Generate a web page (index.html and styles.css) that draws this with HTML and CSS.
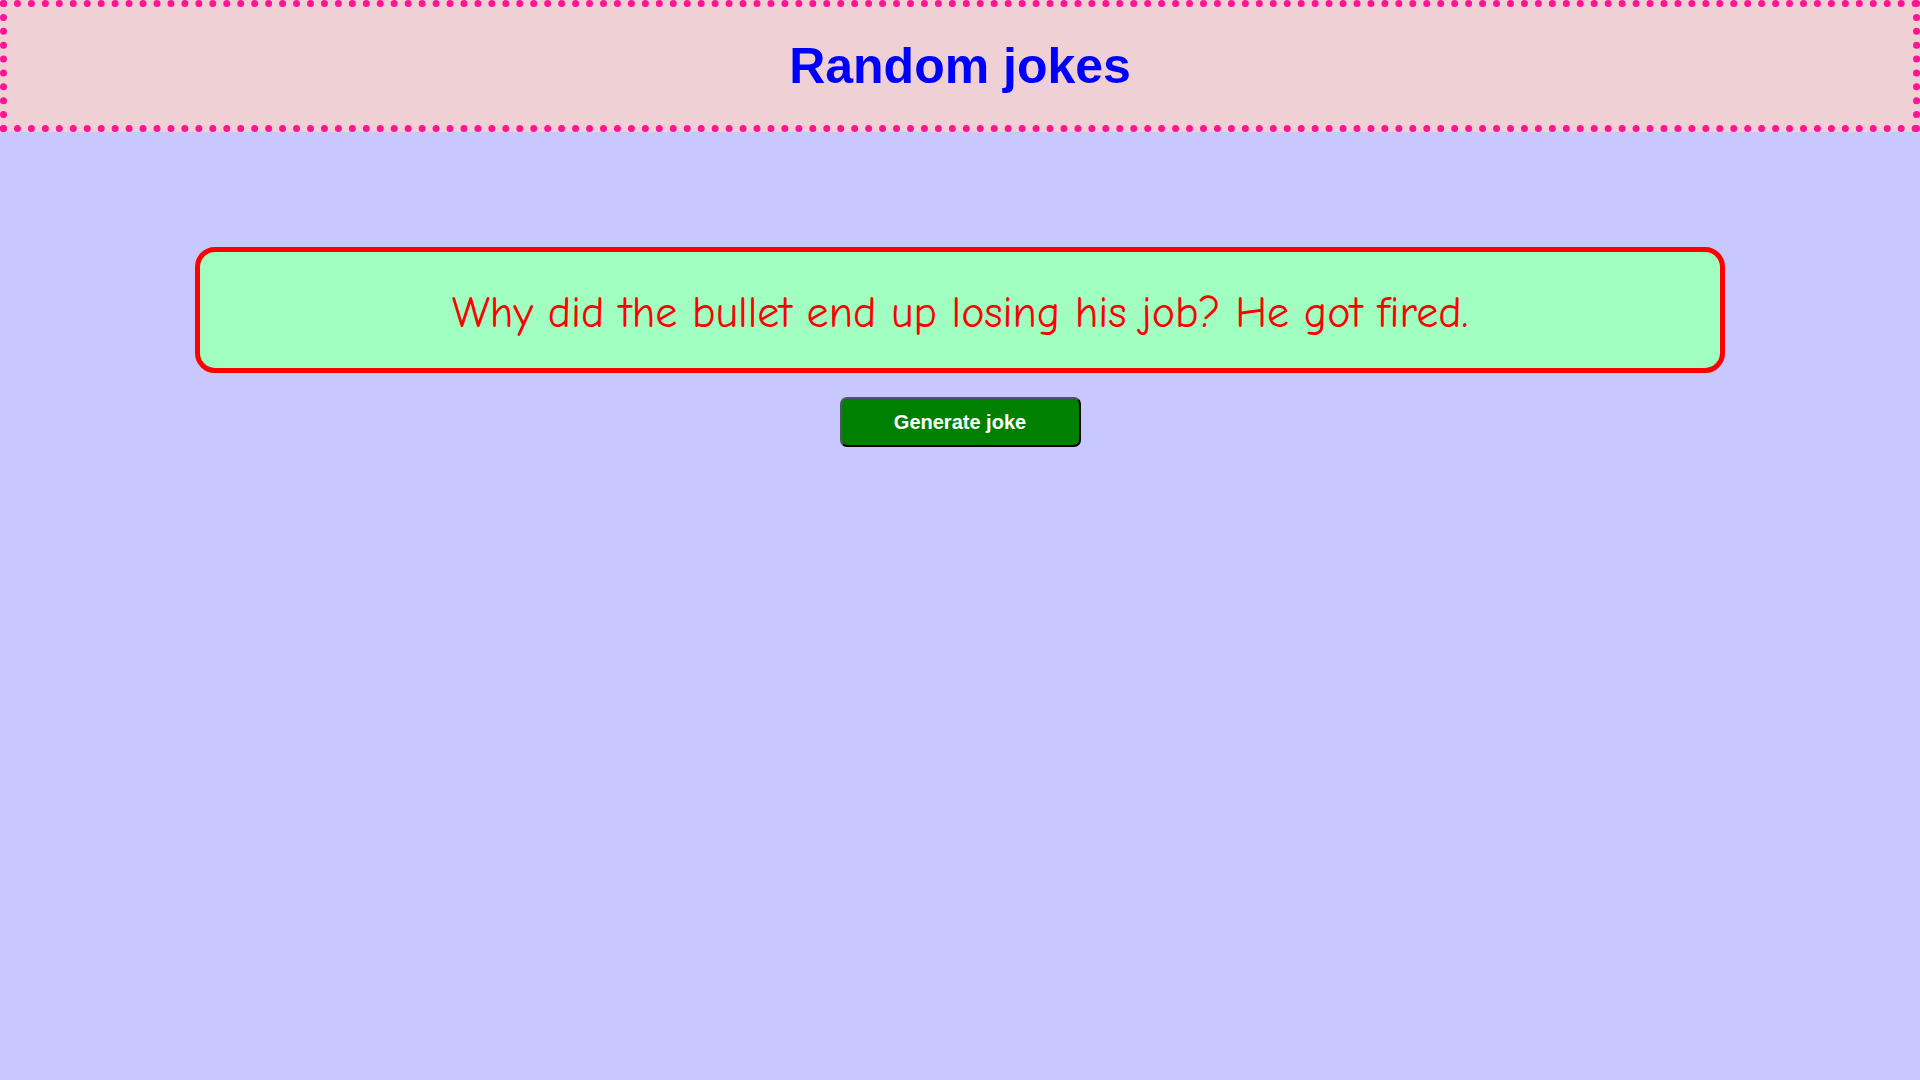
FILE: index.html
```html
<!DOCTYPE html>
<html lang="en">
<head>
<meta charset="utf-8">
<title>Random jokes</title>
<link rel="stylesheet" href="styles.css">
</head>
<body>
<header class="header">
  <h1 class="title">Random jokes</h1>
</header>
<main class="main">
  <div class="joke-box">
    <p class="joke">Why did the bullet end up losing his job? He got fired.</p>
  </div>
  <button class="btn" type="button">Generate joke</button>
</main>
</body>
</html>
```
FILE: styles.css
```css
html, body {
  margin: 0;
  padding: 0;
}
body {
  background: #c8c8ff;
  font-family: "Liberation Sans", Arial, sans-serif;
  min-height: 100vh;
}
.header {
  box-sizing: border-box;
  height: 132px;
  background: #efd0d5;
  border: 7px dotted #ff1493;
  display: flex;
  align-items: center;
  justify-content: center;
}
.title {
  margin: 0;
  font-size: 50px;
  font-weight: bold;
  color: #0000ff;
  line-height: normal;
}
.main {
  display: flex;
  flex-direction: column;
  align-items: center;
  padding-top: 115px;
  gap: 24px;
}
.joke-box {
  box-sizing: border-box;
  width: 1530px;
  height: 126px;
  background: #a0ffc0;
  border: 5px solid #ff0000;
  border-radius: 20px;
  display: flex;
  align-items: center;
  justify-content: center;
  padding-top: 4px;
}
.joke {
  margin: 0;
  font-family: "Comic Sans MS", "Comic Neue", cursive;
  font-size: 44px;
  color: #ff0000;
}
.btn {
  box-sizing: border-box;
  width: 241px;
  height: 50px;
  background: #008000;
  color: #ffffff;
  font-family: "Liberation Sans", Arial, sans-serif;
  font-size: 20px;
  font-weight: bold;
  border: 2px solid;
  border-color: #55506a #000000 #000000 #55506a;
  border-radius: 7px;
  cursor: pointer;
}
```
